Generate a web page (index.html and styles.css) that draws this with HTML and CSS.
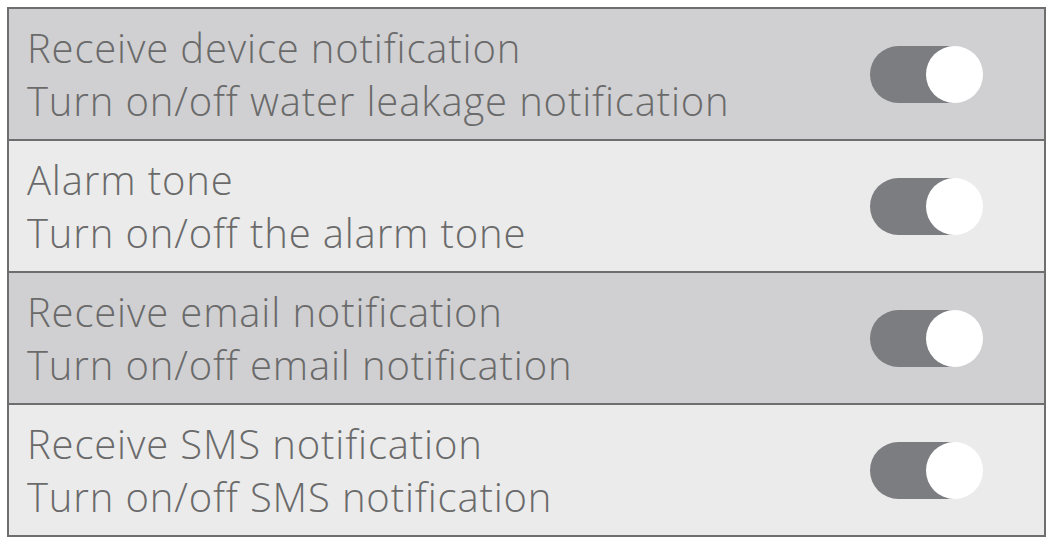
FILE: index.html
```html
<!DOCTYPE html>
<html>
  <head>
    <meta charset="UTF-8" />
    <title>Notification settings</title>
    <link rel="stylesheet" href="styles.css">
  </head>
  <body>
    <div class="settings">
      <div class="row dark">
        <div class="label">
          <div>Receive device notification</div>
          <div>Turn on/off water leakage notification</div>
        </div>
        <div class="switch on"><span class="knob"></span></div>
      </div>
      <div class="row light">
        <div class="label">
          <div>Alarm tone</div>
          <div>Turn on/off the alarm tone</div>
        </div>
        <div class="switch on"><span class="knob"></span></div>
      </div>
      <div class="row dark">
        <div class="label">
          <div>Receive email notification</div>
          <div>Turn on/off email notification</div>
        </div>
        <div class="switch on"><span class="knob"></span></div>
      </div>
      <div class="row light">
        <div class="label">
          <div>Receive SMS notification</div>
          <div>Turn on/off SMS notification</div>
        </div>
        <div class="switch on"><span class="knob"></span></div>
      </div>
    </div>
  </body>
</html>
```

FILE: styles.css
```css
body {
  margin: 0;
  padding: 7px;
  background-color: #ffffff;
  font-family: 'Open Sans', 'Noto Sans', sans-serif;
}
.settings {
  width: 1035px;
  border: 2px solid #6e6e6e;
  border-bottom: none;
}
.row {
  display: flex;
  justify-content: space-between;
  align-items: center;
  height: 130px;
  padding: 0 68px 0 18px;
  border-bottom: 2px solid #6e6e6e;
}
.dark {
  background-color: #d0d0d2;
}
.light {
  background-color: #ebebeb;
}
.label {
  color: #6a6a6a;
  font-size: 40px;
  font-weight: 350;
  line-height: 53px;
  letter-spacing: 0.85px;
}
.switch {
  position: relative;
  width: 106px;
  height: 57px;
  border-radius: 29px;
  background-color: #7c7d80;
}
.knob {
  position: absolute;
  top: 0;
  right: -7px;
  width: 57px;
  height: 57px;
  border-radius: 50%;
  background-color: #ffffff;
}
```
